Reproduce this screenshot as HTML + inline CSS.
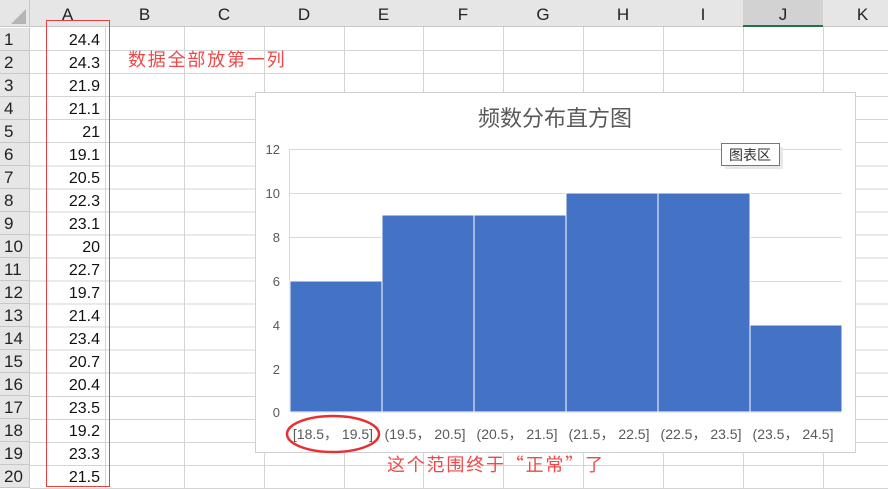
<!DOCTYPE html><html><head><meta charset="utf-8"><style>
body{margin:0;width:888px;height:488px;overflow:hidden;background:#fff;font-family:"Liberation Sans","Noto Sans CJK SC",sans-serif;position:relative}
.a{position:absolute}
#grid{left:30px;top:27.5px;width:858px;height:461px;background-image:repeating-linear-gradient(to bottom,transparent 0,transparent 22.05px,#d4d4d4 22.05px,#d4d4d4 23.05px)}
.v{position:absolute;top:0;width:1px;height:488px;background:#d4d4d4}
.hd{position:absolute;top:0;height:27px;background:#e6e6e6;border-right:1px solid #c8c8c8;box-sizing:border-box;text-align:center;font-size:17px;line-height:30px;color:#222;border-bottom:1px solid #c8c8c8}
.rn{position:absolute;left:0;width:30px;background:#e6e6e6;border-bottom:1px solid #c8c8c8;border-right:1px solid #c8c8c8;box-sizing:border-box;font-size:17px;padding-left:4px;color:#222;line-height:23px}
.num{position:absolute;right:788px;font-size:16px;color:#111;line-height:23px}
.red{font-family:"Noto Sans CJK SC",sans-serif;font-size:18px;letter-spacing:1.8px;color:#f04848;line-height:24px}
</style></head><body>
<div class="a" id="grid"></div>
<div class="v" style="left:105px"></div><div class="v" style="left:184px"></div><div class="v" style="left:264px"></div><div class="v" style="left:344px"></div><div class="v" style="left:423px"></div><div class="v" style="left:503px"></div><div class="v" style="left:583px"></div><div class="v" style="left:663px"></div><div class="v" style="left:743px"></div><div class="v" style="left:823px"></div>
<div class="hd" style="left:0;width:30px"><svg width="30" height="27"><polygon points="26,9 26,24 11,24" fill="#b4b4b4"/></svg></div>
<div class="hd" style="left:30px;width:76px">A</div>
<div class="hd" style="left:105px;width:80px">B</div>
<div class="hd" style="left:184px;width:81px">C</div>
<div class="hd" style="left:264px;width:81px">D</div>
<div class="hd" style="left:344px;width:80px">E</div>
<div class="hd" style="left:423px;width:81px">F</div>
<div class="hd" style="left:503px;width:81px">G</div>
<div class="hd" style="left:583px;width:81px">H</div>
<div class="hd" style="left:663px;width:81px">I</div>
<div class="hd" style="left:743px;width:81px;background:#d2d2d2;border-bottom:2px solid #217346">J</div>
<div class="hd" style="left:823px;width:80px">K</div>
<div id="rows"></div>
<script>
var v=[24.4,24.3,21.9,21.1,21,19.1,20.5,22.3,23.1,20,22.7,19.7,21.4,23.4,20.7,20.4,23.5,19.2,23.3,21.5],h='';
for(var i=0;i<20;i++){var t=27.5+i*23.05;h+='<div class="rn" style="top:'+t+'px;height:23.05px">'+(i+1)+'</div><div class="num" style="top:'+(t+1)+'px">'+v[i]+'</div>';}
document.getElementById('rows').innerHTML=h;
</script>
<div class="a" style="left:46px;top:20px;width:62px;height:465px;border:1px solid #e84040"></div>
<div class="a red" style="left:128px;top:47px">数据全部放第一列</div>
<div class="a" style="left:255px;top:92px;width:599px;height:359px;background:#fff;border:1px solid #d0d0d0"></div>
<div class="a" style="left:255px;top:101px;width:600px;text-align:center;font-size:22px;color:#595959">频数分布直方图</div>
<svg class="a" style="left:0;top:0" width="888" height="488">
<g stroke="#d9d9d9" stroke-width="1">
<line x1="290" y1="149.5" x2="842" y2="149.5"/><line x1="290" y1="193.5" x2="842" y2="193.5"/><line x1="290" y1="237.5" x2="842" y2="237.5"/><line x1="290" y1="281.5" x2="842" y2="281.5"/><line x1="290" y1="325.5" x2="842" y2="325.5"/><line x1="290" y1="369.5" x2="842" y2="369.5"/><line x1="290" y1="412.5" x2="842" y2="412.5"/><line x1="289.5" y1="149" x2="289.5" y2="412"/></g>
<g fill="#4472c4" stroke="#fff" stroke-width="1">
<rect x="290" y="281" width="92" height="131"/><rect x="382" y="215" width="92" height="197"/><rect x="474" y="215" width="92" height="197"/><rect x="566" y="193" width="92" height="219"/><rect x="658" y="193" width="92" height="219"/><rect x="750" y="325" width="92" height="87"/></g>
<g font-family="Liberation Sans,sans-serif" font-size="13" fill="#595959" text-anchor="end">
<text x="280" y="154">12</text><text x="280" y="198">10</text><text x="280" y="242">8</text><text x="280" y="286">6</text><text x="280" y="330">4</text><text x="280" y="374">2</text><text x="280" y="417">0</text></g>
<g font-family="Liberation Sans,Noto Sans CJK SC,sans-serif" font-size="14" fill="#595959" text-anchor="middle">
<text x="333" y="439">[18.5， 19.5]</text><text x="425" y="439">(19.5， 20.5]</text><text x="517" y="439">(20.5， 21.5]</text><text x="609" y="439">(21.5， 22.5]</text><text x="701" y="439">(22.5， 23.5]</text><text x="793" y="439">(23.5， 24.5]</text></g>
<ellipse cx="333" cy="434" rx="46" ry="18" fill="none" stroke="#e83030" stroke-width="2.5"/>
<rect x="725" y="147" width="58" height="22" fill="#e8e8e8"/>
<rect x="721.5" y="143.5" width="58" height="22" fill="#fff" stroke="#777"/>
<text x="750" y="160" font-family="Noto Sans CJK SC,sans-serif" font-size="14" fill="#333" text-anchor="middle">图表区</text>
</svg>
<div class="a red" style="left:387px;top:452px">这个范围终于“正常”了</div>
</body></html>
